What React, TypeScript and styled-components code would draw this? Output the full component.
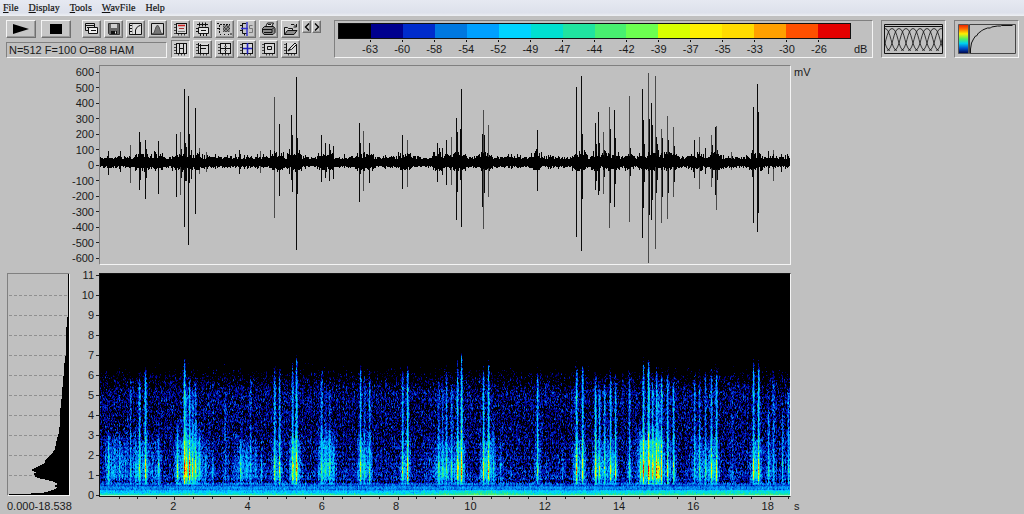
import React, { useMemo } from "react";
import styled, { createGlobalStyle, css } from "styled-components";

const GlobalStyle = createGlobalStyle`
  * { box-sizing: border-box; }
  body { margin: 0; background: #c0c0c0; }
`;

const Page = styled.div`
  min-height: 100vh;
  background: #c0c0c0;
  color: #1a1a1a;
  font: 11px/14px "Liberation Sans", Arial, sans-serif;
`;

const MenuBar = styled.nav`
  display: flex;
  gap: 10px;
  height: 16px;
  padding: 0 3px;
  background: linear-gradient(#e6e9f2, #dde1eb 80%, #eef0f4);
`;

const MenuItem = styled.button`
  padding: 0;
  border: 0;
  background: none;
  color: #111;
  font: 10px/14px "Liberation Serif", "Times New Roman", serif;
  -webkit-text-stroke: 0.2px #111;
`;

const Toolbar = styled.header`
  display: flex;
  align-items: flex-start;
  gap: 8px;
  padding: 4px 5px 7px 6px;
`;

const ControlColumn = styled.div`
  display: flex;
  flex: none;
  flex-direction: column;
  gap: 4px;
  width: 161px;
`;

const ControlRow = styled.div`
  display: flex;
  gap: 3px;
`;

const TransportRow = styled.div`
  display: flex;
  gap: 5px;
  margin-right: 8px;
`;

const raised = css`
  border: 1px solid;
  border-color: #f4f4f4 #707070 #707070 #f4f4f4;
  box-shadow: inset -1px -1px #9a9a9a;
`;

const sunken = css`
  border: 1px solid;
  border-color: #808080 #f4f4f4 #f4f4f4 #808080;
`;

const ToolButton = styled.button<{ $wide?: boolean; $pressed?: boolean }>`
  display: flex;
  flex: none;
  align-items: center;
  justify-content: center;
  width: ${(p) => (p.$wide ? 30 : 19)}px;
  height: 18px;
  padding: 0;
  background: ${(p) => (p.$pressed ? "#cdcdcd" : "#c6c6c6")};
  ${(p) => (p.$pressed ? sunken : raised)}
`;

const ArrowButton = styled(ToolButton)`
  width: 9px;
  height: 13px;
`;

const Status = styled.output`
  display: block;
  height: 16px;
  padding-left: 2px;
  white-space: nowrap;
  ${sunken}
`;

const IconGrid = styled.div`
  display: flex;
  flex: none;
  flex-direction: column;
  gap: 2px;
  width: 151px;
  margin-left: -4px;
`;

const ArrowPair = styled.div`
  display: flex;
  gap: 1px;
  margin-left: -1px;
`;

const Legend = styled.section`
  display: grid;
  flex: 1;
  grid-template-columns: minmax(0, 1fr) 18px;
  column-gap: 3px;
  height: 38px;
  margin-left: 4px;
  padding: 2px 0 0 3px;
  ${sunken}
`;

const ColorBar = styled.div`
  display: flex;
  height: 16px;
  border: 1px solid #111;
`;

const Swatch = styled.span<{ $color: string }>`
  flex: 1;
  background: ${(p) => p.$color};
`;

const LegendLabels = styled.div`
  display: grid;
  grid-column: 1;
  grid-template-columns: repeat(15, minmax(0, 1fr));
  margin: 0 3.125%;
`;

const LegendLabel = styled.span`
  display: flex;
  flex-direction: column;
  align-items: center;
  &::before {
    content: "";
    width: 1px;
    height: 2px;
    background: #111;
  }
`;

const Unit = styled.span`
  padding-top: 2px;
`;

const Preview = styled.button`
  display: block;
  flex: none;
  width: 65px;
  height: 38px;
  padding: 2px;
  background: none;
  ${sunken}
  svg { display: block; width: 100%; height: 100%; }
`;

const Row = styled.section`
  display: grid;
  grid-template-columns: 99px minmax(0, 1fr) 233px;
  align-items: start;
`;

const SpectrumRow = styled(Row)`
  margin-top: 3px;
`;

const SideColumn = styled.div`
  display: flex;
  justify-content: space-between;
  padding-left: 7px;
`;

const AxisLabels = styled.ol<{ $tall?: boolean }>`
  display: flex;
  flex-direction: column;
  justify-content: space-between;
  align-items: flex-end;
  height: ${(p) => (p.$tall ? 234 : 200)}px;
  margin: 0;
  padding: 0;
  list-style: none;
`;

const AxisLabel = styled.li`
  display: flex;
  align-items: center;
  line-height: 14px;
  &::after {
    content: "";
    width: 3px;
    height: 1px;
    margin-left: 2px;
    background: #222;
  }
`;

const WaveFrame = styled.div`
  height: 200px;
  ${sunken}
`;

const Drawing = styled.svg`
  display: block;
  width: 100%;
  height: 100%;
`;

const SpectrumColumn = styled.div`
  padding-top: 5px;
`;

const SpectrumFrame = styled.div`
  height: 224px;
  border: 1px solid #111;
  border-right-color: #f4f4f4;
`;

const TimeTicks = styled.div`
  height: 3px;
  padding: 0 1px;
`;

const TimeLabels = styled.div`
  display: grid;
  grid-template-columns: minmax(0, 1fr) repeat(9, minmax(0, 2fr));
  width: 102%;
  line-height: 12px;
  text-align: center;
`;

const TimeLabel = styled.span<{ $index: number }>`
  grid-column: ${(p) => p.$index + 2};
`;

const Profile = styled.div`
  width: 63px;
  padding-top: 5px;
`;

const ProfileFrame = styled.div`
  height: 223px;
  ${sunken}
`;

const RangeText = styled.div`
  padding-top: 4px;
  line-height: 12px;
  white-space: nowrap;
`;

const WaveUnit = styled.span`
  padding: 0 3px;
`;

const TimeUnit = styled.span`
  align-self: end;
  padding-left: 3px;
  line-height: 12px;
`;

const PALETTE = [
  "#000000", "#00008e", "#002ccc", "#0078e0", "#00a0ff", "#00d4ff", "#00e0d0", "#20e4a0",
  "#48f070", "#6cff50", "#d8ff00", "#fff000", "#ffdc00", "#ffa000", "#ff5000", "#e40000",
];

const LEVELS = [-63, -60, -58, -54, -52, -49, -47, -44, -42, -39, -37, -35, -33, -30, -26];
const MILLIVOLTS = [600, 500, 400, 300, 200, 100, 0, -100, -200, -300, -400, -500, -600];
const KILOHERTZ = [11, 10, 9, 8, 7, 6, 5, 4, 3, 2, 1, 0];
const SECONDS = [2, 4, 6, 8, 10, 12, 14, 16, 18];

/* Call pulses of the recording: position, upper peak, lower peak, 1 = faint */
const PULSES: number[][] = [
  [108, 151, 175, 0], [120, 151, 172, 0], [130, 145, 183, 1], [139, 132, 190, 0], [140, 142, 180, 0],
  [145, 140, 199, 0], [146, 149, 178, 0], [158, 141, 194, 0], [176, 134, 197, 0], [180, 132, 195, 1],
  [181, 149, 178, 0], [184, 89, 227, 0], [185, 143, 181, 0], [186, 147, 181, 0], [188, 96, 245, 0],
  [189, 134, 183, 0], [191, 150, 179, 0], [195, 108, 214, 0], [199, 148, 174, 1], [206, 152, 172, 1],
  [239, 150, 174, 0], [260, 151, 173, 1], [274, 97, 218, 1], [279, 124, 196, 0], [289, 149, 174, 0],
  [291, 115, 180, 0], [292, 135, 192, 0], [296, 77, 250, 0], [297, 138, 194, 0], [321, 135, 182, 0],
  [325, 143, 178, 0], [329, 144, 181, 0], [333, 146, 179, 0], [359, 123, 202, 0], [360, 143, 174, 0],
  [363, 131, 191, 1], [369, 143, 183, 0], [402, 135, 189, 0], [407, 140, 187, 1], [437, 143, 182, 0],
  [442, 148, 175, 0], [446, 140, 185, 0], [451, 137, 185, 1], [456, 118, 220, 0], [457, 132, 192, 0],
  [460, 129, 180, 0], [461, 89, 227, 0], [482, 134, 207, 0], [483, 110, 229, 1], [484, 135, 193, 0],
  [488, 125, 197, 1], [537, 130, 191, 0], [539, 153, 170, 0], [576, 87, 237, 0], [581, 76, 251, 0],
  [582, 134, 199, 0], [595, 123, 190, 0], [596, 144, 181, 0], [598, 112, 195, 0], [599, 143, 191, 0],
  [603, 132, 194, 1], [604, 150, 177, 0], [609, 107, 228, 1], [610, 129, 203, 0], [614, 110, 207, 0],
  [615, 138, 184, 0], [629, 96, 222, 1], [630, 148, 176, 0], [642, 89, 238, 0], [643, 120, 208, 0],
  [644, 144, 182, 0], [648, 73, 263, 1], [649, 119, 215, 0], [651, 103, 220, 0], [652, 125, 200, 0],
  [655, 76, 249, 1], [656, 137, 193, 0], [657, 144, 180, 0], [661, 129, 223, 1], [662, 138, 197, 0],
  [667, 116, 219, 1], [668, 140, 193, 0], [673, 127, 197, 1], [674, 146, 182, 0], [694, 140, 178, 0],
  [699, 137, 189, 1], [705, 148, 174, 0], [711, 135, 187, 1], [712, 145, 178, 0], [715, 127, 195, 0],
  [716, 126, 210, 1], [717, 150, 180, 0], [731, 152, 170, 1], [752, 150, 177, 0], [753, 107, 223, 0],
  [757, 84, 232, 0], [758, 112, 213, 0], [768, 151, 174, 0], [773, 150, 181, 1], [781, 154, 172, 0],
];

/* Spectrogram streaks: position, top edge, strength of the upper and the lower part */
const STREAKS: number[][] = [
  [108, 433, 3, 2], [114, 436, 1, 1], [119, 440, 1, 2], [125, 436, 1, 2], [130, 377, 1.3, 3.5],
  [135, 425, 1, 3], [139, 375, 3, 5], [145, 363, 3.6, 7], [152, 436, 1, 1], [158, 432, 1.5, 5.5],
  [177, 420, 2.6, 7.5], [184, 353, 4.4, 10], [186, 385, 2, 6], [189, 376, 3.3, 9], [192, 390, 2, 6],
  [195, 378, 2.4, 7.5], [199, 430, 2, 5], [205, 445, 1, 3], [212, 445, 1, 3], [225, 388, 1.3, 0.5],
  [240, 435, 1.5, 4], [246, 445, 1, 3], [250, 366, 1.1, 3], [255, 440, 1, 3], [261, 444, 1, 3],
  [274, 363, 2.8, 7], [279, 365, 2.8, 7], [292, 355, 3.2, 7], [296, 347, 4, 8], [321, 370, 2.6, 4],
  [325, 390, 1.2, 4], [329, 375, 1.5, 4.5], [333, 430, 1, 3.5], [360, 357, 3.2, 6], [364, 366, 1.8, 4],
  [369, 368, 2.2, 4.5], [402, 366, 2.6, 7], [407, 360, 4.2, 8.5], [438, 380, 1.9, 6], [442, 376, 1.8, 5],
  [446, 367, 2.1, 6], [451, 380, 2, 6], [457, 355, 3.3, 9], [461, 342, 4.4, 9], [483, 365, 3.3, 8.5],
  [488, 353, 3.5, 8.5], [493, 420, 1, 4], [500, 442, 1, 3], [537, 370, 3.6, 5], [562, 447, 1, 2],
  [576, 363, 3.6, 8], [582, 360, 3.4, 7], [595, 380, 3.6, 7.5], [599, 384, 2.8, 6], [604, 380, 2.5, 5],
  [610, 373, 3.2, 7.5], [615, 378, 2.6, 6], [629, 370, 2.3, 5.5], [640, 430, 2, 4], [643, 352, 3.8, 8],
  [648, 352, 4.6, 9], [652, 373, 2.8, 8], [656, 363, 3.4, 9], [658, 385, 2, 5], [661, 370, 3.4, 7],
  [667, 367, 3, 7.5], [673, 378, 3.2, 6.5], [694, 368, 1.9, 3], [699, 376, 1.8, 4], [705, 367, 1.8, 3.5],
  [711, 365, 2.4, 7.5], [716, 367, 3, 7], [732, 385, 0.8, 1], [753, 352, 3.2, 7.5], [758, 357, 3.8, 8.5],
  [768, 410, 2, 3.5], [773, 363, 2, 4], [782, 413, 2, 3], [788, 388, 2.4, 3],
];

/* Broad clouds of energy: left, right, top, gain */
const CLOUDS: number[][] = [
  [102, 130, 426, 1.5], [126, 164, 430, 0.8], [172, 208, 420, 1.3], [232, 254, 432, 1.5],
  [285, 304, 428, 2.2], [314, 338, 424, 1.9], [351, 374, 428, 1.2], [420, 456, 434, 0.9],
  [451, 468, 424, 1.2], [477, 498, 428, 1.6], [570, 590, 430, 1], [589, 620, 434, 0.8],
  [633, 666, 420, 2.1], [690, 720, 432, 1.4], [746, 766, 434, 1],
];

function createRandom(seed: number) {
  let s = seed;
  return () => {
    s = (s + 0x6d2b79f5) | 0;
    let t = Math.imul(s ^ (s >>> 15), 1 | s);
    t = (t + Math.imul(t ^ (t >>> 7), 61 | t)) ^ t;
    return ((t ^ (t >>> 14)) >>> 0) / 4294967296;
  };
}

function mixColor(level: number) {
  const lo = Math.floor(level);
  const hi = Math.min(lo + 1, 15);
  const part = (hex: string, i: number) => parseInt(hex.slice(1 + i * 2, 3 + i * 2), 16);
  const rgb = [0, 1, 2].map((i) =>
    Math.round(part(PALETTE[lo], i) * (1 - (level - lo)) + part(PALETTE[hi], i) * (level - lo))
  );
  return `rgb(${rgb.join(",")})`;
}

function buildSpectrogram() {
  const random = createRandom(512);
  const layers: string[] = Array.from({ length: 31 }, () => "");
  const columnGain = Array.from({ length: 690 }, () => (random() - 0.5) * 0.7);
  const gain: number[][] = Array.from({ length: 690 }, () => []);

  for (let y = 330; y < 495; y++) {
    const f = (495 - y) / 20;
    const stripe = f < 2.6 && y % 4 === 1 ? -0.6 : 0;
    for (let x = 100; x < 790; x++) {
      let base: number;
      if (f > 5.2) base = 0.55 - (f - 5.2) * 1.5 - Math.max(0, f - 6) * 1.6;
      else if (f > 3) base = 0.55 + Math.max(0, 0.2 - Math.abs(f - 4.8) * 0.3);
      else if (f > 1.3) base = 0.7 + (3 - f) * 0.3;
      else if (f > 0.6) base = 1.5;
      else if (f > 0.45) base = 2.7;
      else if (f > 0.25) base = 3.5;
      else if (f > 0.1) base = 4.8;
      else base = 6.6;
      if (f < 0.3) {
        base += 1.6 * Math.exp(-Math.pow((x - 480) / 45, 2)) + 1 / (1 + Math.exp((600 - x) / 20));
      }
      if (f > 0.6 && f < 0.8 && y % 3 === 0) base -= 0.9;

      const spread = f < 0.6 ? 1.4 : 2.6;
      const noise = (random() + random() + random() - 1.5) * spread;
      let v = base + stripe + noise + columnGain[x - 100];

      if (f > 0.55) {
        for (const [left, right, top, amount] of CLOUDS) {
          if (x > left && x < right && y > top) {
            const soft = Math.min(1, (x - left) / 9, (right - x) / 9) * Math.min(1, (y - top) / 22);
            v += amount * soft * (f < 0.9 ? 0.4 : 1) * (0.5 + random() * 0.8);
          }
        }
        for (const [sx, top, upper, lower] of STREAKS) {
          const d = Math.abs(x - sx);
          if (d > 3 || y < top - 4) continue;
          const width = d === 0 ? 1 : x - sx === 1 ? 0.5 : d === 1 ? 0.3 : f < 2.8 ? 0.16 : 0;
          if (!width) continue;
          const fade = Math.min(1, (y - top + 8) / 22);
          const high = upper * 1.2 * fade * (f > 0.7 ? 1 : 0.5);
          const bump = Math.exp(-Math.pow((f - 1.35) / (lower > 6 ? 0.55 : 0.45), 2));
          const low = Math.min(lower, 8) * 0.2 * Math.max(0, Math.min(1, (3.4 - f) / 0.8));
          v += width * (high * (0.7 + random() * 0.6) + low + lower * 0.72 * bump * (0.3 + random() * 0.8));
        }
      }
      gain[x - 100][y - 330] = v;
    }
  }

  for (let x = 100; x < 790; x++) {
    let start = 330;
    let previous = -1;
    for (let y = 330; y <= 495; y++) {
      let step = -1;
      if (y < 495) {
        const here = gain[x - 100][y - 330];
        const above = y > 330 ? gain[x - 100][y - 331] : here;
        step = Math.max(0, Math.min(30, Math.round((here * 0.65 + above * 0.35) * 2)));
      }
      if (step !== previous) {
        if (previous > 0) layers[previous] += `M${x} ${start}h1v${y - start}h-1z`;
        start = y;
        previous = step;
      }
    }
  }
  return layers.map((d, i) => ({ d, color: mixColor(i / 2) })).filter((l) => l.d);
}

function buildBaseline() {
  const random = createRandom(88);
  let d = "";
  for (let x = 100; x < 790; x++) {
    const near = PULSES.some(([px, top]) => Math.abs(px - x) < 5 && top < 145);
    const jump = random() > 0.9 ? 3 : 0;
    const up = Math.round(3 + random() * 3 + jump + (near ? random() * 5 : 0));
    const down = Math.round(3 + random() * 2 + jump * 0.5 + (near ? random() * 4 : 0));
    d += `M${x} ${162 - up}h1v${up + down + 1}h-1z`;
  }
  return d;
}

function Waveform() {
  const baseline = useMemo(buildBaseline, []);
  return (
    <Drawing viewBox="100 66 690 198" preserveAspectRatio="none" shapeRendering="crispEdges" role="img" aria-label="Waveform">
      {PULSES.map(([x, top, bottom, faint]) => (
        <rect key={x} x={x} y={top} width="1" height={bottom - top} fill={faint ? "#4a4a4a" : "#0a0a0a"} />
      ))}
      <path d={baseline} fill="#000" />
    </Drawing>
  );
}

function Spectrogram() {
  const layers = useMemo(buildSpectrogram, []);
  return (
    <Drawing viewBox="100 274 690 222" preserveAspectRatio="none" shapeRendering="crispEdges" role="img" aria-label="Spectrogram">
      <rect x="100" y="274" width="690" height="222" fill="#000" />
      {layers.map((layer) => (
        <path key={layer.color} d={layer.d} fill={layer.color} />
      ))}
      <rect x="100" y="495" width="690" height="1" fill="#a8f0c8" />
    </Drawing>
  );
}

function SpectrumProfile() {
  const contour =
    "M60 0V42L59 44 58 63 57.500 82 56 92 55.500 102 54.500 113 53.500 125 52 138 52 148 51 158 49 165 47 175 43.500 180 40 184 36.500 187 37 189 28.500 193.500 23 196 28 198.500 25.500 200 27.500 202.500 30 204 39 206 45 207.500 50.500 210 46 212 49.500 214 42 217 34 219 12 220 1 220.500V221H61V0z";
  return (
    <Drawing viewBox="0 0 61 221" preserveAspectRatio="none" role="img" aria-label="Average spectrum">
      {KILOHERTZ.slice(1, 11).map((k) => (
        <path key={k} d={`M1 ${221.5 - k * 20}H60`} stroke="#909090" strokeDasharray="3 2" />
      ))}
      <path d={contour} fill="#000" shapeRendering="crispEdges" />
    </Drawing>
  );
}

function TimeScale() {
  const ticks = Array.from({ length: 37 }, (_, i) => Math.round((i + 1) * 18.6));
  return (
    <Drawing viewBox="0 0 690 3" preserveAspectRatio="none" shapeRendering="crispEdges" aria-hidden="true">
      {ticks.map((x, i) => (
        <rect key={x} x={x} y="0" width="1" height={i % 4 === 3 ? 3 : 2} fill="#222" />
      ))}
    </Drawing>
  );
}

function Icon({ children }: { children: React.ReactNode }) {
  return (
    <svg width="15" height="14" viewBox="0 0 15 14" fill="none" stroke="#111" aria-hidden="true">
      {children}
    </svg>
  );
}

/* Plot box with ruler marks below and to the left, shared by the view tools */
function PlotBox() {
  return (
    <>
      <path d="M3 1h11v10H3z" fill="#d8d8d8" stroke="none" />
      <path d="M3.500 1v10.500M3 11.500h11M13.500 2v9" />
      <path d="M1 2.500h2M1 5.500h2M1 8.500h2M1 11.500h2M5.500 12v1.500M8.500 12v1.500M11.500 12v1.500" stroke="#444" />
    </>
  );
}

const FILE_TOOLS: [string, React.ReactNode][] = [
  ["Copy window", <>
    <path d="M1.500 1.500h9v7h-9z" fill="#d8d8d8" /><path d="M1 3.500h9M3 5.500h2" />
    <path d="M4.500 5.500h9v6h-9z" fill="#f0f0f0" /><path d="M7 8.500h5" />
  </>],
  ["Save", <>
    <path d="M2.500 1.500h11v11h-10l-1-1z" fill="#666" stroke="#333" /><path d="M5 2h6v4H5z" fill="#d0d0d0" stroke="none" />
    <path d="M5 9h6v3H5z" fill="#111" stroke="none" /><path d="M9.500 9.500v2" stroke="#eee" />
  </>],
  ["Transfer curve", <>
    <path d="M1.500 1.500h12v11h-12z" fill="#dedede" /><path d="M4.500 2v10" stroke="#aaa" />
    <path d="M7.500 12V8l1-2 2-2 2-.5M2 3.500h2M2 6.500h2M2 9.500h2" />
  </>],
  ["Window function", <>
    <path d="M1.500 1.500h12v11h-12z" fill="#d4d4d4" /><path d="M2 12l2-1 2-6 1.500-2L9 5l2 6 2 1z" fill="#777" stroke="#555" />
  </>],
];

const VIEW_TOOLS: [string, React.ReactNode][] = [
  ["Title", <>
    <PlotBox /><path d="M3 1.500h11" /><path d="M5 3.500h7" stroke="#c22" strokeWidth="1.500" />
    <path d="M6 6.500h5" stroke="#a33" /><path d="M5 9.500h7" stroke="#777" />
  </>],
  ["Fit time", <>
    <path d="M2 2.500h11" /><path d="M4.500 .5v4M7.500 .5v4M10.500 .5v4" />
    <path d="M3.500 5.500h10v6h-10z" fill="#e4e4e4" />
    <path d="M6 8.500h5M1 6.500h2M1 9.500h2M5.500 12v2M8.500 12v2M11.500 12v2" />
  </>],
  ["Select region", <>
    <path d="M2.500 11V2.500H13" strokeDasharray="2 1" /><path d="M6 3h7v7H6z" fill="#8c8c8c" stroke="none" />
    <path d="M6 4l6 6M9 3l4 4M6 7l3 3M13 3L6 10M10 3L6 7M13 6l-4 4" strokeWidth=".5" />
    <path d="M0 1.500h2M0 6.500h2M3.500 12v1M7.500 12v1M11.500 12v1M14 11v2" />
  </>],
  ["Spectrum at cursor", <>
    <path d="M3.500 1v10.500H8M3 1.500h4M1 3.500h2M1 8.500h2M5.500 12v1.500" />
    <path d="M8 0v14M2 6.500h7" stroke="#33c" strokeWidth="1.400" /><path d="M13.500 3.500h-3v3h3v4h-3.500" stroke="#777" />
  </>],
  ["Print", <>
    <path d="M4.500 5l2-4h6l-2 4" fill="#ddd" /><path d="M1.500 6.500l2-2h9l1.500 2v4l-2 2h-9l-1.500-2z" fill="#8a8a8a" />
    <path d="M2 7.500h9l2-2M3 10.500h8v-3M7 2.500h3" />
  </>],
  ["Open", <>
    <path d="M1.500 12.500v-7h3l1 1h4v2" fill="#ccc" /><path d="M1.500 12.500l3-4h9.500l-3 4z" fill="#8c8c8c" />
    <path d="M8 2.500h3l2 2M13.500 2v3h-3" />
  </>],
];

const CURSOR_TOOLS: [string, React.ReactNode][] = [
  ["Time markers", <><PlotBox /><path d="M3 1.500h11M6.500 2v9M10.500 2v9M6 6.500h5" /></>],
  ["Frequency markers", <><PlotBox /><path d="M3 3.500h10M5.500 2v9M6 6.500h5" /></>],
  ["Free cursor", <><PlotBox /><path d="M3 1.500h11M8.500 2v9M4 6.500h9" /><path d="M7 4.500h3M7 8.500h3" stroke="#777" /></>],
  ["Link cursor", <><PlotBox /><path d="M3 1.500h11" /><path d="M8.500 1v11M4 6.500h9" stroke="#22b" strokeWidth="1.600" /></>],
  ["Box cursor", <><PlotBox /><path d="M3 1.500h11M6.500 4.500h4v3h-4z" /></>],
  ["Annotate", <><PlotBox /><path d="M6 8l1-2 5-5 1.500 1.500-5 5z" fill="#ddd" /><path d="M5 9l2-2" strokeWidth="1.500" /></>],
];

/* Overlapping analysis windows */
function HatchPreview() {
  const starts = Array.from({ length: 13 }, (_, i) => i * 7 - 25);
  return (
    <svg viewBox="0 0 59 32" fill="none" stroke="#111" preserveAspectRatio="none" aria-hidden="true">
      <clipPath id="hatch"><path d="M1 2h57v28H1z" /></clipPath>
      <path d="M.5 1.500h58v29H.5zM1 3.500h57" />
      <g clipPath="url(#hatch)" strokeWidth=".8">
        {starts.map((x) => (
          <path key={x} d={`M${x} 27.500c6 0 6-22 12-22s6 22 12 22`} />
        ))}
      </g>
    </svg>
  );
}

function CurvePreview() {
  return (
    <svg viewBox="0 0 59 32" fill="none" preserveAspectRatio="none" aria-hidden="true">
      <defs>
        <linearGradient id="scale" x2="0" y2="1">
          <stop offset="0" stopColor="#e82000" /><stop offset=".15" stopColor="#ff6a00" />
          <stop offset=".32" stopColor="#fff000" /><stop offset=".5" stopColor="#50f060" />
          <stop offset=".65" stopColor="#00d0f0" /><stop offset=".82" stopColor="#0050d0" />
          <stop offset="1" stopColor="#000040" />
        </linearGradient>
      </defs>
      <path d="M1.500 1.500h10v29h-10z" fill="url(#scale)" stroke="#555" />
      <path d="M12.500 1.500h46v29h-46z" stroke="#444" />
      <path d="M13.500 30v-4l1-6 2-4 2-3h1l2-3 3-2 1-1 5-2h3l1-1 6-1h3l1-.5h11" stroke="#111" />
    </svg>
  );
}

const MENUS = ["File", "Display", "Tools", "WavFile", "Help"];

export default function App() {
  return (
    <Page>
      <GlobalStyle />
      <MenuBar aria-label="Main menu">
        {MENUS.map((name) => (
          <MenuItem key={name} type="button">
            {name === "Help" ? name : <><u>{name[0]}</u>{name.slice(1)}</>}
          </MenuItem>
        ))}
      </MenuBar>

      <Toolbar>
        <ControlColumn>
          <ControlRow>
            <TransportRow>
              <ToolButton $wide type="button" aria-label="Play">
                <svg width="18" height="12" viewBox="0 0 18 12" aria-hidden="true"><path d="M1 1l16 5-16 5z" /></svg>
              </ToolButton>
              <ToolButton $wide type="button" aria-label="Stop">
                <svg width="12" height="12" viewBox="0 0 12 12" aria-hidden="true"><path d="M0 1h12v10H0z" /></svg>
              </ToolButton>
            </TransportRow>
            {FILE_TOOLS.map(([name, art]) => (
              <ToolButton key={name} type="button" aria-label={name}><Icon>{art}</Icon></ToolButton>
            ))}
          </ControlRow>
          <Status>N=512 F=100 O=88 HAM</Status>
        </ControlColumn>

        <IconGrid>
          <ControlRow>
            {VIEW_TOOLS.map(([name, art]) => (
              <ToolButton key={name} type="button" aria-label={name}><Icon>{art}</Icon></ToolButton>
            ))}
            <ArrowPair>
              <ArrowButton type="button" aria-label="Previous">
                <svg width="6" height="8" viewBox="0 0 6 8" fill="none" stroke="#000" strokeWidth="1.300" aria-hidden="true"><path d="M5 .5L1.500 4 5 7.500" /></svg>
              </ArrowButton>
              <ArrowButton type="button" aria-label="Next">
                <svg width="6" height="8" viewBox="0 0 6 8" fill="none" stroke="#000" strokeWidth="1.300" aria-hidden="true"><path d="M1 .5L4.500 4 1 7.500" /></svg>
              </ArrowButton>
            </ArrowPair>
          </ControlRow>
          <ControlRow>
            {CURSOR_TOOLS.map(([name, art], i) => (
              <ToolButton key={name} type="button" $pressed={i === 0} aria-pressed={i === 0} aria-label={name}>
                <Icon>{art}</Icon>
              </ToolButton>
            ))}
          </ControlRow>
        </IconGrid>

        <Legend aria-label="Level scale">
          <ColorBar>
            {PALETTE.map((color) => <Swatch key={color} $color={color} />)}
          </ColorBar>
          <LegendLabels>
            {LEVELS.map((level) => <LegendLabel key={level}>{level}</LegendLabel>)}
          </LegendLabels>
          <Unit>dB</Unit>
        </Legend>

        <Preview type="button" aria-label="Window overlap"><HatchPreview /></Preview>
        <Preview type="button" aria-label="Colour curve"><CurvePreview /></Preview>
      </Toolbar>

      <main>
        <Row>
          <AxisLabels>
            {MILLIVOLTS.map((value) => <AxisLabel key={value}>{value}</AxisLabel>)}
          </AxisLabels>
          <WaveFrame><Waveform /></WaveFrame>
          <WaveUnit>mV</WaveUnit>
        </Row>

        <SpectrumRow>
          <SideColumn>
            <Profile>
              <ProfileFrame><SpectrumProfile /></ProfileFrame>
              <RangeText>0.000-18.538</RangeText>
            </Profile>
            <AxisLabels $tall>
              {KILOHERTZ.map((value) => <AxisLabel key={value}>{value}</AxisLabel>)}
            </AxisLabels>
          </SideColumn>
          <SpectrumColumn>
            <SpectrumFrame><Spectrogram /></SpectrumFrame>
            <TimeTicks><TimeScale /></TimeTicks>
            <TimeLabels>
              {SECONDS.map((value, i) => <TimeLabel key={value} $index={i}>{value}</TimeLabel>)}
            </TimeLabels>
          </SpectrumColumn>
          <TimeUnit>s</TimeUnit>
        </SpectrumRow>
      </main>
    </Page>
  );
}
